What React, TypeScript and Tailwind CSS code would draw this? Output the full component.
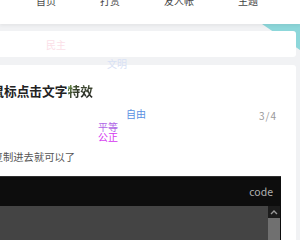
import React from "react";

export default function App() {
  return (
    <div
      className="relative w-[300px] h-[240px] overflow-hidden bg-[#f1f2f4]"
      style={{ fontFamily: '"Noto Sans CJK SC", "Noto Sans", sans-serif' }}
    >
      {/* decorative teal corner */}
      <svg className="absolute left-0 top-0 z-0" width="300" height="240">
        <polygon points="262,24 300,24 300,50" fill="#8dd7da" />
      </svg>

      {/* top nav */}
      <nav className="relative z-20 h-[24px] bg-white flex items-start gap-[44px] pl-[36px] text-[10px] leading-[10px] text-[#444] shadow-[0_2px_3px_rgba(0,0,0,0.05)]">
        <span className="-mt-[4px]">首页</span>
        <span className="-mt-[4px]">打赏</span>
        <span className="-mt-[4px]">友人帐</span>
        <span className="-mt-[4px]">主题</span>
      </nav>

      <main className="relative z-10 flex flex-col gap-[8px] pt-[7px] pr-[4px]">
        <div className="h-[26px] bg-white rounded-r-[3px]" />

        <div className="bg-white rounded-tr-[3px] h-[200px] flex flex-col pt-[19px] pr-[15px]">
          <h1 className="ml-[-8.7px] text-[12.7px] leading-[14px] font-bold text-[#222] whitespace-nowrap">
            鼠标点击文字
            <span className="bg-gradient-to-br from-[#86c24a] via-[#3d4a2e] to-[#222] bg-clip-text text-transparent">特</span>
            <span className="bg-gradient-to-b from-[#4c5a38] to-[#222] bg-clip-text text-transparent">效</span>
          </h1>
          <div className="mt-[12px] flex justify-end pr-[4px] text-[10px] leading-[12px] text-[#999] tracking-[1px]">
            3/4
          </div>
          <p className="mt-[28px] ml-[-7.3px] text-[10.3px] leading-[14px] text-[#555] whitespace-nowrap">
            复制进去就可以了
          </p>
          <div className="mt-[12px] flex flex-col bg-[#0d0d0d] border-t border-[#2f2f2f] h-[70px]">
            <div className="h-[29px] flex items-center justify-end pr-[8px] text-[10.5px] text-[#b0b0b0]">
              code
            </div>
            <div className="flex flex-1">
              <div className="flex-1 bg-[#444444]" />
              <div className="w-[12px] flex flex-col mr-[1px]">
                <div className="h-[12px] bg-[#1c1c1c] flex items-center justify-center">
                  <svg width="8" height="6" viewBox="0 0 8 6">
                    <polyline points="1,5 4,2 7,5" fill="none" stroke="#9a9a9a" strokeWidth="1.4" />
                  </svg>
                </div>
                <div className="flex-1 bg-[#707070]" />
              </div>
            </div>
          </div>
        </div>
      </main>

      {/* floating click-effect words */}
      <span className="absolute z-30 left-[46px] top-[39px] text-[10px] leading-[12px] text-[#fbe0e8]">民主</span>
      <span className="absolute z-30 left-[107px] top-[58px] text-[10px] leading-[12px] text-[#d8e1f4]">文明</span>
      <span className="absolute z-30 left-[126px] top-[108px] text-[10px] leading-[12px] text-[#5a90e2]">自由</span>
      <span className="absolute z-30 left-[98px] top-[121px] text-[10px] leading-[12px] text-[#b066e6]">平等</span>
      <span className="absolute z-30 left-[98px] top-[131px] text-[10px] leading-[12px] text-[#d535f0]">公正</span>
    </div>
  );
}
